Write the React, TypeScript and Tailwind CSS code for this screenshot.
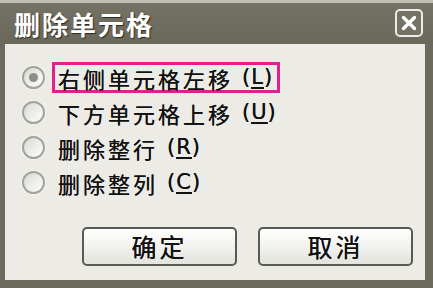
import React from "react";

const cjk = { fontFamily: '"Noto Sans CJK SC", "Liberation Sans", sans-serif' };

function Radio({ checked }: { checked?: boolean }) {
  return (
    <div className="w-[23px] h-[23px] rounded-full border-2 border-[#a3a39c] bg-gradient-to-br from-[#d9d9d4] to-[#ffffff] flex items-center justify-center shrink-0 shadow-[0_0_0_1px_#f4f4f0]">
      {checked && <div className="w-[9px] h-[9px] rounded-full bg-[#8e8e88]" />}
    </div>
  );
}

function Row({ label, k, checked, focus }: { label: string; k: string; checked?: boolean; focus?: boolean }) {
  return (
    <div className="h-[35px] flex items-center">
      <Radio checked={checked} />
      <div
        className={
          "ml-[7px] h-[31px] flex items-center pl-[3px] pr-[4px] border-[3px] " +
          (focus ? "border-[#e0208c]" : "border-transparent")
        }
      >
        <span className="text-[22px] tracking-[3px] text-[#111] leading-none [text-shadow:0_0_0.6px_#111]" style={cjk}>
          {label}
        </span>
        <span
          className="text-[21px] tracking-[1px] text-[#111] leading-none ml-[9px] [text-shadow:0_0_0.6px_#111]"
          style={{ fontFamily: '"DejaVu Sans", sans-serif' }}
        >
          (<span className="underline underline-offset-[3px]">{k}</span>)
        </span>
      </div>
    </div>
  );
}

function Btn({ label }: { label: string }) {
  return (
    <div className="w-[155px] h-[39px] rounded-[5px] border-2 border-[#5a5a54] bg-gradient-to-b from-[#ffffff] to-[#e4e4de] flex items-center justify-center">
      <span className="text-[25px] tracking-[3px] text-[#111] leading-none [text-shadow:0_0_0.6px_#111]" style={cjk}>
        {label}
      </span>
    </div>
  );
}

export default function App() {
  return (
    <div className="w-[433px] h-[288px] bg-[#6b6a5c] flex flex-col overflow-hidden">
      <div className="h-[44px] shrink-0 border-t-[3px] border-[#bebeb5] bg-gradient-to-b from-[#737264] to-[#69685a] flex items-center justify-between pl-[14px] pr-[10px]">
        <span
          className="text-[26px] font-bold tracking-[2px] text-white leading-none [text-shadow:1px_1px_1px_#2a2a22]"
          style={cjk}
        >
          删除单元格
        </span>
        <div className="w-[28px] h-[28px] mt-[-2px] rounded-[5px] border-2 border-[#ecece6] bg-[#737265] flex items-center justify-center">
          <svg width="18" height="18" viewBox="0 0 18 18">
            <path d="M3.5 3.5 L14.5 14.5 M14.5 3.5 L3.5 14.5" stroke="#ffffff" strokeWidth="3.4" strokeLinecap="round" />
          </svg>
        </div>
      </div>
      <div className="flex-1 ml-[5px] mr-[8px] mb-[8px] bg-[#ecebe6] flex flex-col pt-[16px] pl-[17px]">
        <Row label="右侧单元格左移" k="L" checked focus />
        <Row label="下方单元格上移" k="U" />
        <Row label="删除整行" k="R" />
        <Row label="删除整列" k="C" />
        <div className="flex justify-end gap-[21px] pr-[12px] mt-[27px]">
          <Btn label="确定" />
          <Btn label="取消" />
        </div>
      </div>
    </div>
  );
}
